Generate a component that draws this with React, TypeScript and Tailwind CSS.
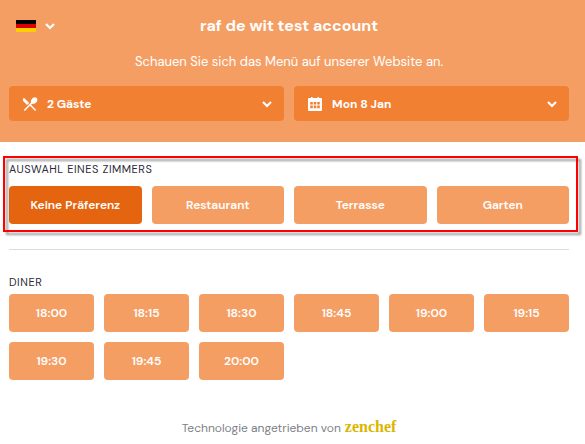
import React, { useState } from 'react';
import { MdLocalDining } from 'react-icons/md';

const ROOMS = ['Keine Präferenz', 'Restaurant', 'Terrasse', 'Garten'];
const SLOTS = ['18:00', '18:15', '18:30', '18:45', '19:00', '19:15', '19:30', '19:45', '20:00'];

const Chevron: React.FC = () => (
  <svg className="pointer-events-none h-2 w-3 shrink-0" viewBox="0 0 12 8" fill="none" aria-hidden="true">
    <path d="M2 2l4 4 4-4" stroke="currentColor" strokeWidth="2.2" />
  </svg>
);

const GermanFlag: React.FC = () => (
  <svg className="h-3 w-5" viewBox="0 0 20 12" aria-hidden="true">
    <rect width="20" height="4" fill="#000" />
    <rect y="4" width="20" height="4" fill="#d00" />
    <rect y="8" width="20" height="4" fill="#ffce00" />
  </svg>
);

const CalendarIcon: React.FC = () => (
  <svg className="h-4 w-4" viewBox="0 0 16 16" aria-hidden="true">
    <path fill="currentColor" d="M3 2h2V1h1.5v1h5V1H13v1h2a1 1 0 0 1 1 1v11a1 1 0 0 1-1 1H3a1 1 0 0 1-1-1V3a1 1 0 0 1 1-1z" />
    <path
      className="fill-[#f28033]"
      d="M4.2 6h2.6v2.5H4.2zM7.7 6h2.6v2.5H7.7zM11.2 6h2.6v2.5h-2.6zM4.2 9.6h2.6v2.6H4.2zM7.7 9.6h2.6v2.6H7.7zM11.2 9.6h2.6v2.6h-2.6z"
    />
  </svg>
);

interface PickerProps {
  label: string;
  icon: React.ReactNode;
  options: string[];
}

const Picker: React.FC<PickerProps> = ({ label, icon, options }) => (
  <label className="flex h-[35px] items-center rounded bg-[#f28033] pr-[11px] pl-3">
    <span className="flex w-[26px] shrink-0 items-center">{icon}</span>
    <select aria-label={label} className="min-w-0 flex-1 appearance-none bg-transparent text-xs font-bold outline-none">
      {options.map((option) => (
        <option key={option}>{option}</option>
      ))}
    </select>
    <Chevron />
  </label>
);

const App: React.FC = () => {
  const [room, setRoom] = useState(ROOMS[0]);

  return (
    <div className="min-h-screen bg-white font-['DM_Sans',Inter,sans-serif] text-[#2b2b3a]">
      <header className="bg-[#f59e64] pt-4 pr-4 pb-[21px] pl-[9px] text-white">
        <div className="grid grid-cols-[1fr_auto_1fr] items-center">
          <button type="button" aria-label="Sprache: Deutsch" className="flex items-center gap-2 justify-self-start pl-[7px]">
            <GermanFlag />
            <Chevron />
          </button>
          <h1 className="text-base leading-5 font-bold">raf de wit test account</h1>
        </div>
        <p className="mt-4 text-center text-[13px] leading-5">Schauen Sie sich das Menü auf unserer Website an.</p>
        <div className="mt-[14px] grid grid-cols-2 gap-[10px]">
          <Picker label="Gäste" icon={<MdLocalDining size={18} />} options={['2 Gäste', '3 Gäste', '4 Gäste']} />
          <Picker label="Datum" icon={<CalendarIcon />} options={['Mon 8 Jan', 'Die 9 Jan', 'Mit 10 Jan']} />
        </div>
      </header>

      <main className="pr-4 pl-[9px]">
        <section className="relative pt-[19px]">
          <h2 className="text-[11px] leading-4 tracking-wider">AUSWAHL EINES ZIMMERS</h2>
          <div className="mt-[9px] grid grid-cols-4 gap-[10px]">
            {ROOMS.map((name) => (
              <button
                key={name}
                type="button"
                aria-pressed={room === name}
                onClick={() => setRoom(name)}
                className={`h-[38px] rounded text-xs font-semibold text-white ${
                  room === name ? 'bg-[#e5640f]' : 'bg-[#f59e64]'
                }`}
              >
                {name}
              </button>
            ))}
          </div>
          {/* Highlight frame around the room picker */}
          <div className="pointer-events-none absolute top-[14px] -right-[9px] -bottom-2 -left-[6px] border-2 border-[#f00] drop-shadow-[3px_3px_1px_rgba(0,0,0,0.4)]" />
        </section>

        <hr className="mt-[25px] border-[#dcdcdc]" />

        <section className="mt-6">
          <h2 className="text-[11px] leading-4 tracking-wider">DINER</h2>
          <div className="mt-1 grid grid-cols-6 gap-[10px]">
            {SLOTS.map((slot) => (
              <button key={slot} type="button" className="h-[38px] rounded bg-[#f59e64] text-xs font-semibold text-white">
                {slot}
              </button>
            ))}
          </div>
        </section>
      </main>

      <footer className="mt-[37px] flex items-baseline justify-center gap-1 pr-4 pl-[9px] text-xs leading-5 text-[#7c7f88]">
        <span>Technologie angetrieben von</span>
        <a href="#zenchef" className="font-['Liberation_Serif',serif] text-base leading-5 font-bold text-[#dab600]">
          zenchef
        </a>
      </footer>
    </div>
  );
};

export default App;
